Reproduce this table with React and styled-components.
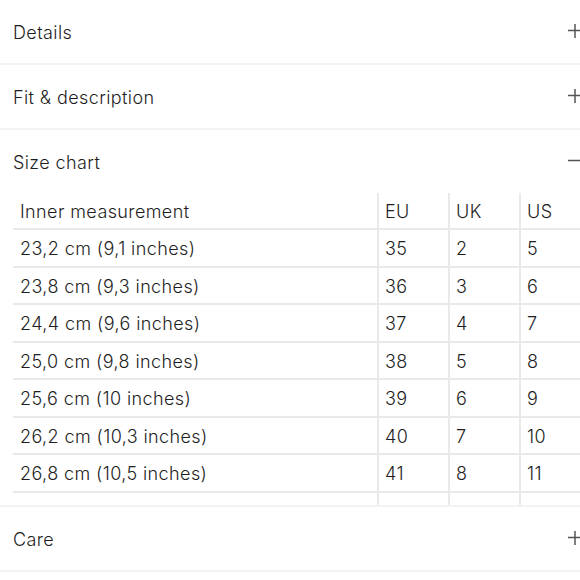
import React from "react";
import styled, { createGlobalStyle } from "styled-components";

const sections = [
  { title: "Details", open: false },
  { title: "Fit & description", open: false },
  { title: "Size chart", open: true },
  { title: "Care", open: false },
];

const sizes = [
  ["23,2 cm (9,1 inches)", "35", "2", "5"],
  ["23,8 cm (9,3 inches)", "36", "3", "6"],
  ["24,4 cm (9,6 inches)", "37", "4", "7"],
  ["25,0 cm (9,8 inches)", "38", "5", "8"],
  ["25,6 cm (10 inches)", "39", "6", "9"],
  ["26,2 cm (10,3 inches)", "40", "7", "10"],
  ["26,8 cm (10,5 inches)", "41", "8", "11"],
];

function ToggleIcon({ open }) {
  return (
    <Icon viewBox="0 0 14 14" aria-hidden="true">
      <line x1="0" y1="6.5" x2="14" y2="6.5" />
      {!open && <line x1="7" y1="0" x2="7" y2="14" />}
    </Icon>
  );
}

function SizeChart() {
  return (
    <TableWrap>
      <Table>
        <colgroup>
          <col style={{ width: 365 }} />
          <col style={{ width: 71 }} />
          <col style={{ width: 71 }} />
          <col style={{ width: 71 }} />
        </colgroup>
        <thead>
          <tr>
            <Head>Inner measurement</Head>
            <Head>EU</Head>
            <Head>UK</Head>
            <Head>US</Head>
          </tr>
        </thead>
        <tbody>
          {sizes.map((row) => (
            <tr key={row[0]}>
              {row.map((cell, i) => (
                <Cell key={i}>{cell}</Cell>
              ))}
            </tr>
          ))}
          <tr aria-hidden="true">
            {[0, 1, 2, 3].map((i) => (
              <Cell key={i} />
            ))}
          </tr>
        </tbody>
      </Table>
    </TableWrap>
  );
}

export default function App() {
  return (
    <>
      <GlobalStyle />
      <Page>
        {sections.map((s) => (
          <Section key={s.title}>
            <Header>
              <Title>{s.title}</Title>
              <ToggleIcon open={s.open} />
            </Header>
            {s.open && <SizeChart />}
          </Section>
        ))}
      </Page>
    </>
  );
}

const GlobalStyle = createGlobalStyle`
  html, body {
    margin: 0;
    background: #fff;
    overflow: hidden;
  }
  body {
    font-family: Inter, "Noto Sans", sans-serif;
    color: #222;
  }
`;

const Page = styled.div`
  width: 595px;
  display: flex;
  flex-direction: column;
`;

const Section = styled.section`
  border-bottom: 2px solid #f3f3f3;
`;

const Header = styled.div`
  box-sizing: border-box;
  height: 63px;
  padding: 2px 13px 0;
  display: flex;
  align-items: center;
  justify-content: space-between;
`;

const Title = styled.span`
  font-size: 18px;
  line-height: 22px;
  font-weight: 300;
  letter-spacing: 0.4px;
  color: #1e1e1e;
`;

const Icon = styled.svg`
  width: 14px;
  height: 14px;
  margin-top: -3px;
  stroke: #555;
  stroke-width: 1.5;
  flex: none;
`;

const TableWrap = styled.div`
  height: 312px;
  overflow: hidden;
  padding-left: 13px;
`;

const Table = styled.table`
  width: 578px;
  table-layout: fixed;
  border-collapse: collapse;
  font-size: 18px;
  font-weight: 300;
  letter-spacing: 0.4px;
`;

const Head = styled.th`
  box-sizing: border-box;
  height: 36px;
  padding: 2px 0 0 6px;
  text-align: left;
  font-weight: 300;
  color: #1e1e1e;
  border-bottom: 2px solid #e9e9e9;
  vertical-align: middle;
  &:first-child {
    padding-left: 7px;
  }
  & + & {
    border-left: 2px solid #e9e9e9;
  }
`;

const Cell = styled.td`
  box-sizing: border-box;
  height: 37.5px;
  padding: 2px 0 0 6px;
  color: #1e1e1e;
  border-bottom: 2px solid #e9e9e9;
  vertical-align: middle;
  &:first-child {
    padding-left: 7px;
  }
  & + & {
    border-left: 2px solid #e9e9e9;
  }
`;
